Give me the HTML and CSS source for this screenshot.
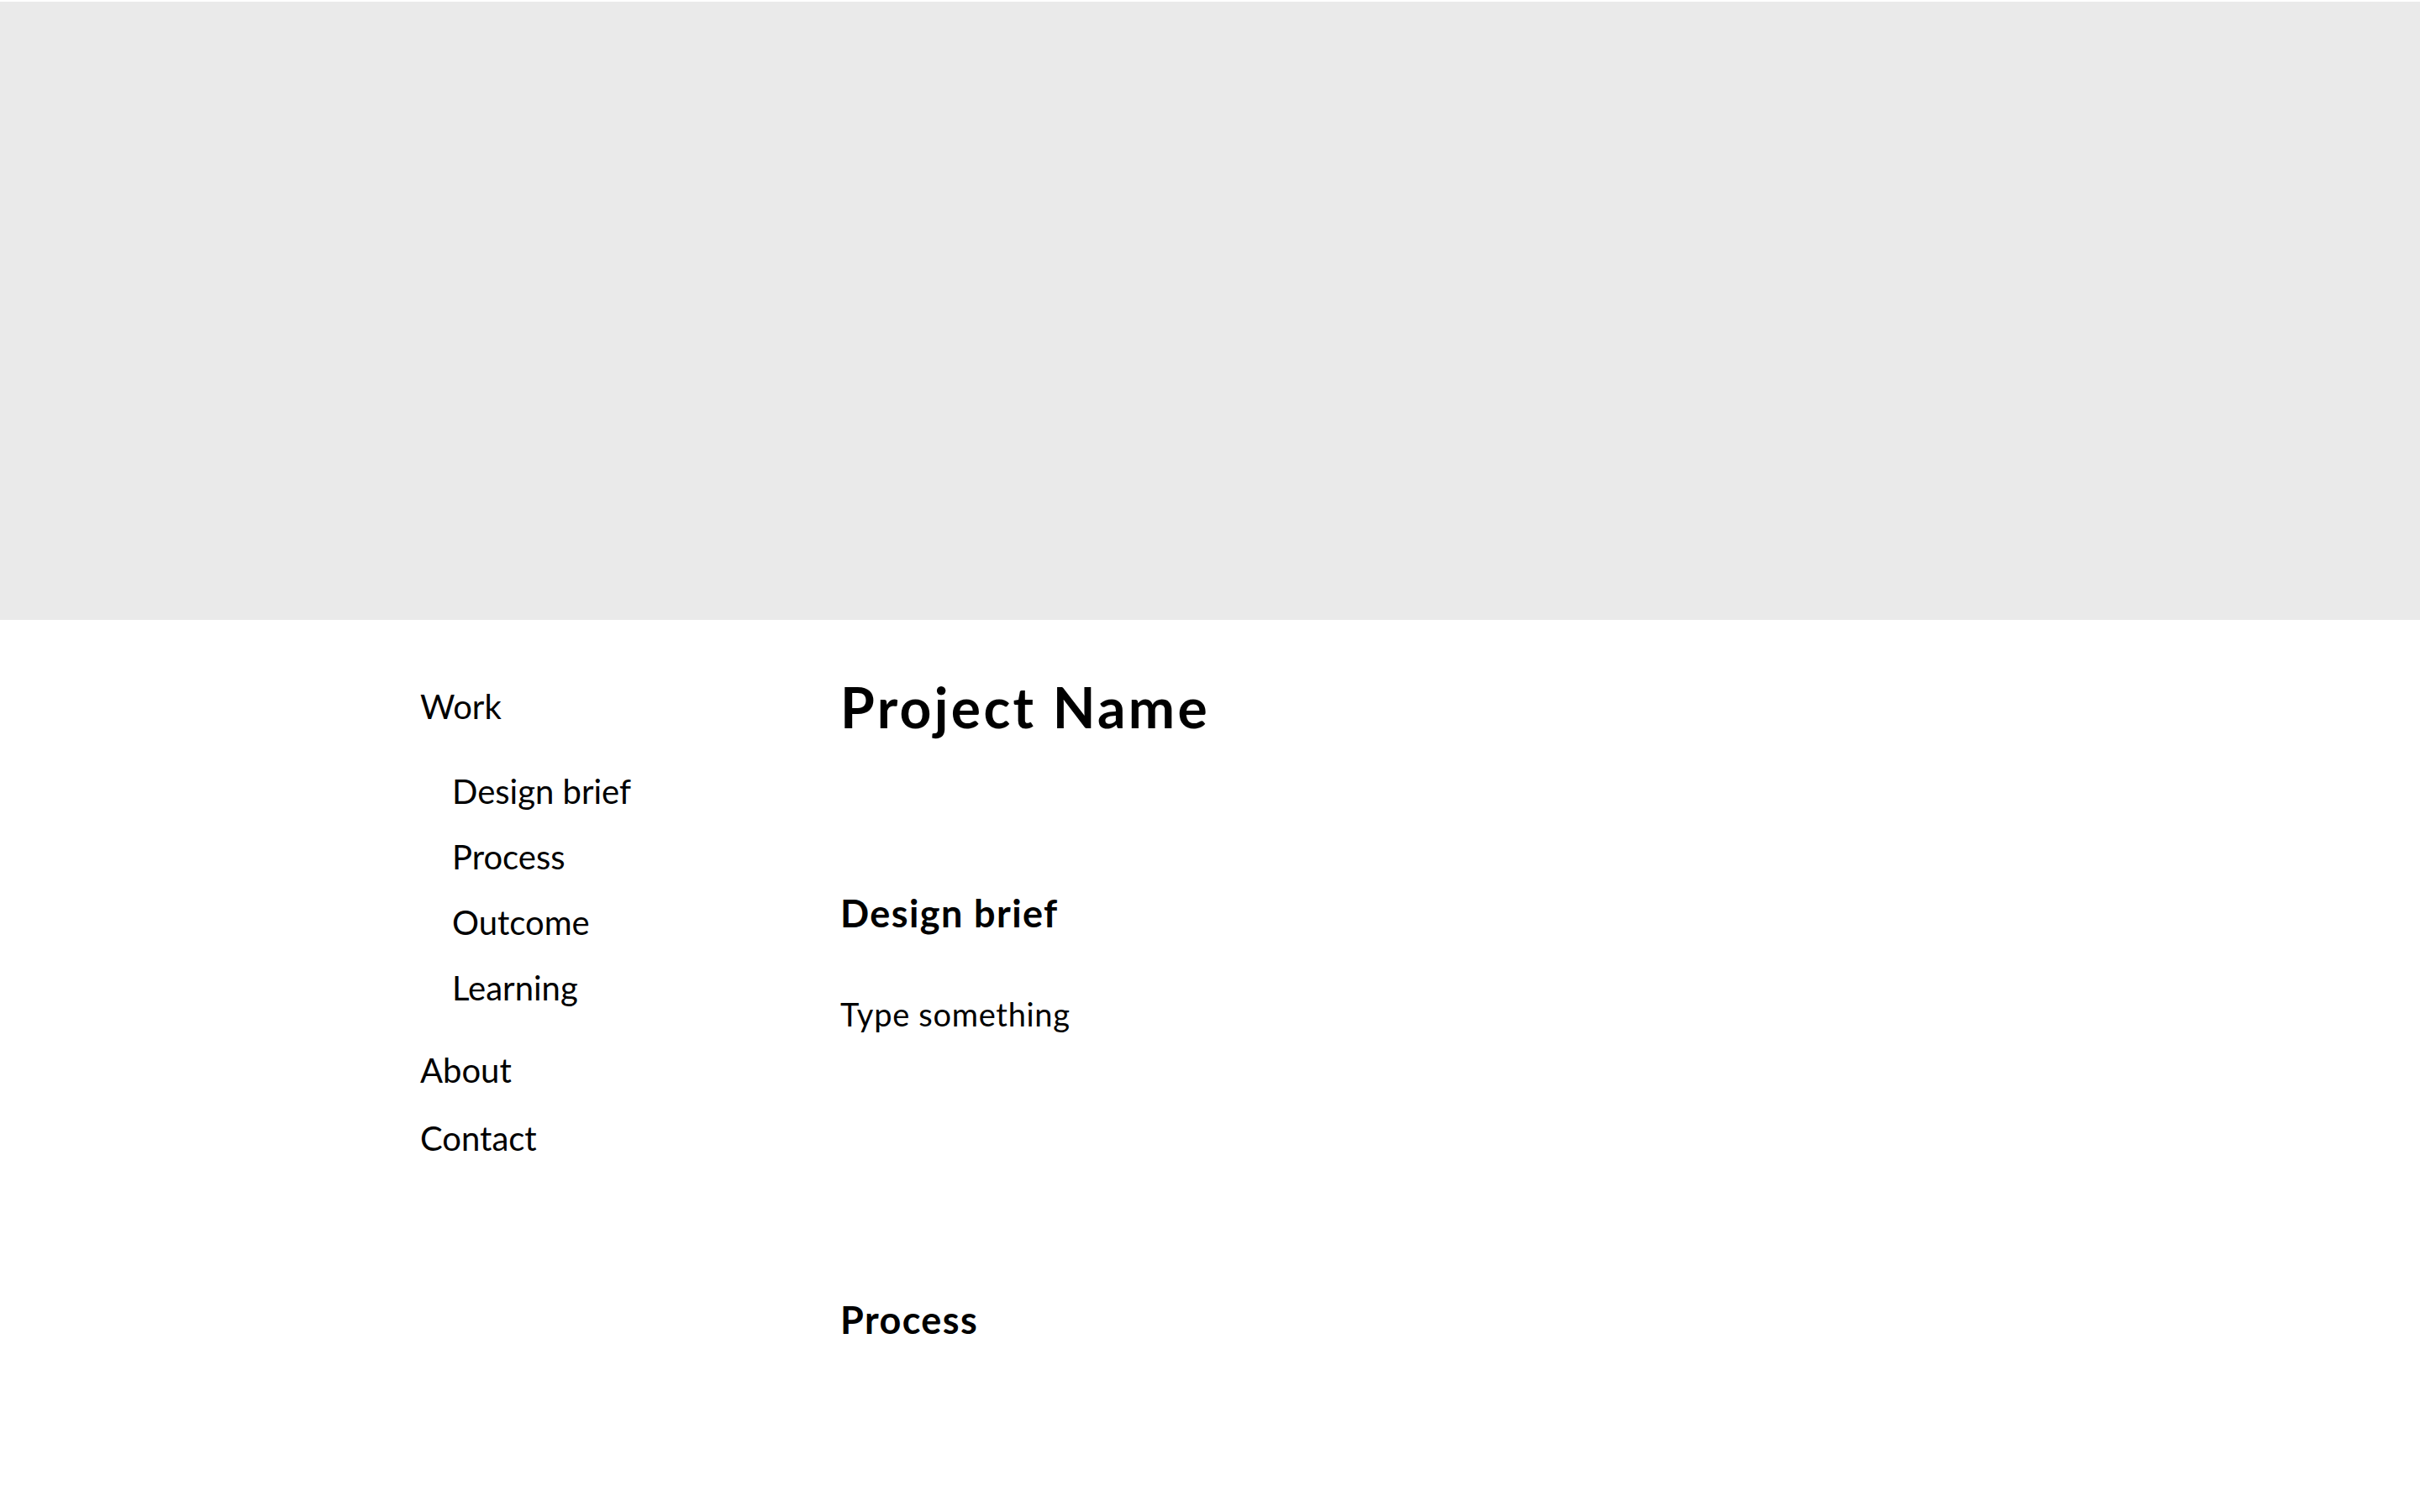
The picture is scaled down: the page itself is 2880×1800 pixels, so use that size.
FILE: index.html
```html
<!DOCTYPE html>
<html lang="en">
<head>
<meta charset="utf-8">
<title>Project Name</title>
<link rel="stylesheet" href="styles.css">
</head>
<body>
<div class="hero"></div>
<div class="layout">
  <nav class="sidenav">
    <ul class="nav-list">
      <li class="nav-item nav-work">Work
        <ul class="sub-list">
          <li class="sub-item">Design brief</li>
          <li class="sub-item">Process</li>
          <li class="sub-item">Outcome</li>
          <li class="sub-item">Learning</li>
        </ul>
      </li>
      <li class="nav-item nav-about">About</li>
      <li class="nav-item nav-contact">Contact</li>
    </ul>
  </nav>
  <main class="content">
    <h1 class="title">Project Name</h1>
    <section class="section section-brief">
      <h2 class="section-title">Design brief</h2>
      <p class="section-text">Type something</p>
    </section>
    <section class="section section-process">
      <h2 class="section-title">Process</h2>
    </section>
  </main>
</div>
</body>
</html>
```

FILE: styles.css
```css
html, body {
  margin: 0;
  padding: 0;
  background: #ffffff;
}
body {
  padding-top: 2px;
  font-family: "Lato", "Noto Sans", sans-serif;
  color: #000000;
  line-height: 1.2;
}
.hero {
  height: 736px;
  background: #eaeaea;
}
.layout {
  display: flex;
  padding: 64px 0 0 500px;
}
.sidenav {
  width: 500px;
  flex: none;
  padding-top: 15px;
}
.nav-list, .sub-list {
  list-style: none;
  margin: 0;
  padding: 0;
}
.nav-item {
  font-size: 40px;
  font-weight: 400;
  line-height: 48px;
}
.sub-list {
  margin-top: 53px;
  padding-left: 38px;
  display: flex;
  flex-direction: column;
  gap: 30px;
}
.nav-about {
  margin-top: 50px;
}
.nav-contact {
  margin-top: 33px;
}
.content {
  flex: 1;
}
.title {
  margin: 0;
  font-size: 66px;
  font-weight: 700;
  line-height: 1.2;
  letter-spacing: 3.3px;
}
.section-title {
  margin: 0;
  font-size: 45px;
  font-weight: 700;
  line-height: 54px;
  letter-spacing: 1.4px;
}
.section-brief {
  margin-top: 179px;
}
.section-text {
  margin: 71px 0 0;
  font-size: 38px;
  line-height: 1.2;
  letter-spacing: 0.7px;
}
.section-process {
  margin-top: 313px;
}
```
